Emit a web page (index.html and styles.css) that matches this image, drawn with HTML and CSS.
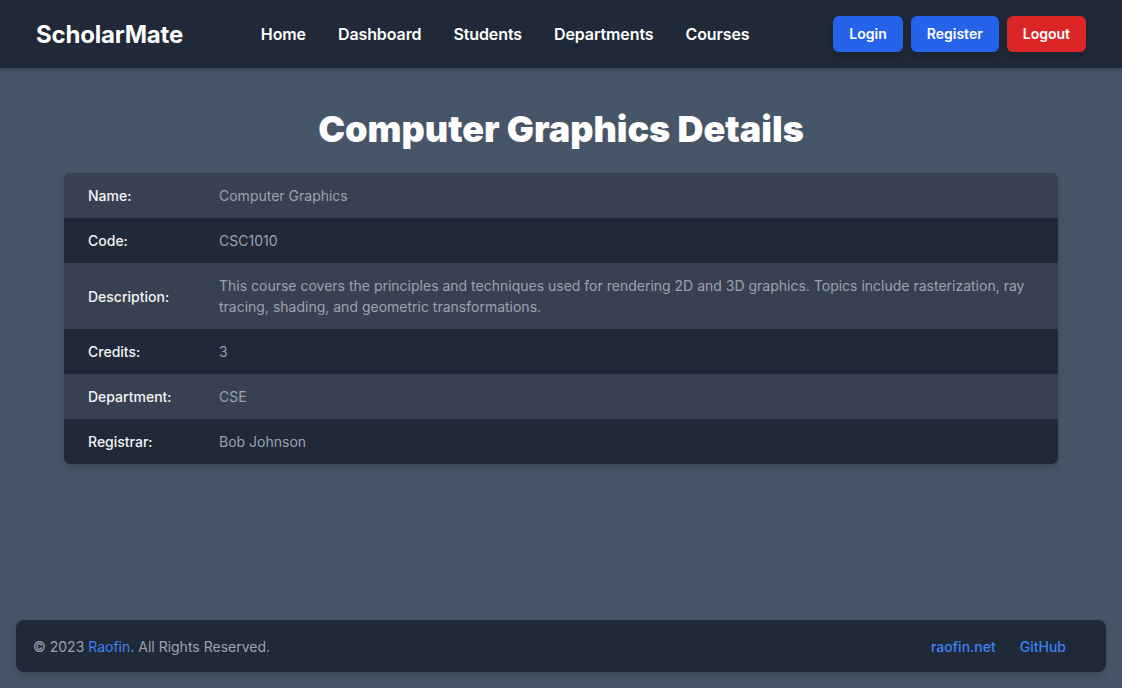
FILE: index.html
```html
<!DOCTYPE html>
<html lang="en">
<head>
<meta charset="utf-8">
<title>ScholarMate</title>
<link rel="stylesheet" href="styles.css">
</head>
<body>
<div class="page">
  <header class="navbar">
    <a class="brand" href="#">ScholarMate</a>
    <nav class="links">
      <a href="#">Home</a>
      <a href="#">Dashboard</a>
      <a href="#">Students</a>
      <a href="#">Departments</a>
      <a href="#">Courses</a>
    </nav>
    <div class="actions">
      <a class="btn btn-blue" href="#">Login</a>
      <a class="btn btn-blue" href="#">Register</a>
      <a class="btn btn-red" href="#">Logout</a>
    </div>
  </header>

  <main class="main">
    <h1 class="title">Computer Graphics Details</h1>
    <div class="card">
      <table class="details">
        <tbody>
          <tr class="odd"><th>Name:</th><td>Computer Graphics</td></tr>
          <tr class="even"><th>Code:</th><td>CSC1010</td></tr>
          <tr class="odd"><th>Description:</th><td>This course covers the principles and techniques used for rendering 2D and 3D graphics. Topics include rasterization, ray tracing, shading, and geometric transformations.</td></tr>
          <tr class="even"><th>Credits:</th><td>3</td></tr>
          <tr class="odd"><th>Department:</th><td>CSE</td></tr>
          <tr class="even"><th>Registrar:</th><td>Bob Johnson</td></tr>
        </tbody>
      </table>
    </div>
  </main>

  <footer class="footer">
    <p class="copy">© 2023 <a href="#">Raofin</a>. All Rights Reserved.</p>
    <div class="footer-links">
      <a href="#">raofin.net</a>
      <a href="#">GitHub</a>
    </div>
  </footer>
</div>
</body>
</html>
```

FILE: styles.css
```css
* { box-sizing: border-box; }

html, body {
  margin: 0;
  padding: 0;
}

body {
  background: #475569;
  font-family: Inter, "Noto Sans", "Liberation Sans", sans-serif;
  color: #fff;
}

a { text-decoration: none; color: inherit; }

.page {
  min-height: 100vh;
  display: flex;
  flex-direction: column;
}

.navbar {
  height: 68px;
  background: #1f2937;
  display: flex;
  align-items: center;
  justify-content: space-between;
  padding: 0 36px;
  box-shadow: 0 1px 3px rgba(0,0,0,0.3);
}

.brand {
  font-size: 24px;
  font-weight: 700;
  color: #fff;
  letter-spacing: -0.2px;
}

.links {
  display: flex;
  gap: 32px;
  margin-right: 6px;
}

.links a {
  font-size: 16px;
  font-weight: 600;
  color: #fff;
  letter-spacing: -0.1px;
}

.actions {
  display: flex;
  gap: 8px;
}

.btn {
  display: inline-block;
  padding: 8px 16px;
  line-height: 20px;
  font-size: 14px;
  font-weight: 600;
  border-radius: 6px;
  color: #fff;
  box-shadow: 0 4px 6px rgba(0,0,0,0.15);
}

.btn-blue { background: #2563eb; }
.btn-red { background: #dc2626; }

.main {
  flex: 1;
  padding: 41px 64px 24px;
}

.title {
  margin: 0 0 24px;
  text-align: center;
  font-size: 36px;
  line-height: 40px;
  font-weight: 900;
  color: #fff;
}

.card {
  border-radius: 6px;
  overflow: hidden;
  box-shadow: 0 4px 6px rgba(0,0,0,0.15);
}

.details {
  width: 100%;
  border-collapse: collapse;
  font-size: 14px;
  line-height: 21px;
}

.details th {
  width: 155px;
  text-align: left;
  font-weight: 500;
  color: #f3f4f6;
  padding: 12px 24px;
  vertical-align: middle;
}

.details td {
  padding: 12px 24px 12px 0;
  color: #9ca3af;
  vertical-align: middle;
}

.details tr.odd { background: #374151; }
.details tr.even { background: #1f2937; }

.footer {
  margin: 0 16px 16px;
  height: 52px;
  background: #1f2937;
  border-radius: 8px;
  display: flex;
  align-items: center;
  justify-content: space-between;
  padding: 0 40px 0 17px;
  box-shadow: 0 4px 6px rgba(0,0,0,0.15);
  font-size: 14px;
}

.copy {
  margin: 0;
  color: #9ca3af;
}

.copy a { color: #3b82f6; }

.footer-links {
  display: flex;
  gap: 24px;
}

.footer-links a {
  color: #3b82f6;
  font-weight: 500;
}
```
